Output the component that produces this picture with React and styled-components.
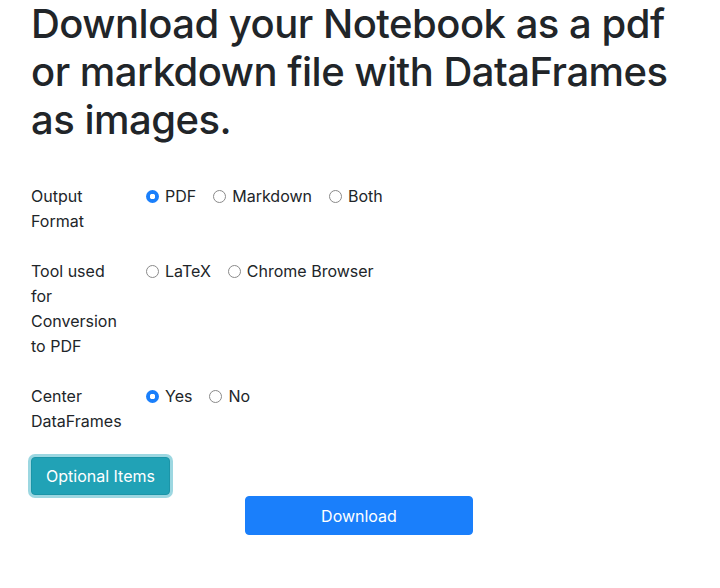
import React, { useState } from "react";
import styled, { createGlobalStyle } from "styled-components";

const Global = createGlobalStyle`
  html, body { margin: 0; padding: 0; background: #fff; }
  body {
    font-family: Inter, "Liberation Sans", Arial, sans-serif;
    color: #212529;
    font-size: 16px;
  }
`;

const Page = styled.div`
  width: 720px;
  padding: 0 0 0 31px;
  box-sizing: border-box;
`;

const Title = styled.h1`
  margin: 0 0 40px;
  font-size: 40px;
  line-height: 48px;
  font-weight: 450;
  letter-spacing: -0.5px;
  width: 660px;
`;

const Row = styled.div`
  display: grid;
  grid-template-columns: 92px 1fr;
  column-gap: 23px;
  line-height: 25px;
  margin-bottom: 25px;
`;

const Label = styled.div``;

const Options = styled.div`
  display: flex;
  align-items: flex-start;
`;

const Option = styled.label`
  display: flex;
  align-items: center;
  height: 25px;
  margin-right: 17px;
  cursor: pointer;
`;

const Radio = styled.input.attrs({ type: "radio" })`
  appearance: none;
  -webkit-appearance: none;
  margin: 0 6px 0 0;
  width: 13px;
  height: 13px;
  border-radius: 50%;
  border: 1px solid #8a8a8a;
  background: #fff;
  box-sizing: border-box;
  &:checked {
    border: none;
    background: radial-gradient(circle, #fff 0 2.6px, #1a7ffb 3px);
  }
`;

const OptionalButton = styled.button`
  margin-top: -2px;
  height: 38px;
  padding: 0 14px;
  font-family: inherit;
  font-size: 16px;
  color: #fff;
  background: #21a2b6;
  border: 1px solid #1c95a8;
  border-radius: 4px;
  box-shadow: 0 0 0 3px rgba(58, 176, 195, 0.5);
  cursor: pointer;
`;

const Footer = styled.div`
  display: flex;
  justify-content: center;
  margin: 1px 0 0 -31px;
  padding-right: 2px;
`;

const DownloadButton = styled.button`
  width: 228px;
  height: 39px;
  font-family: inherit;
  font-size: 16px;
  color: #fff;
  background: #1a7ffb;
  border: 1px solid #1a7ffb;
  border-radius: 4px;
  cursor: pointer;
`;

function RadioRow({ label, name, options, value, onChange }) {
  return (
    <Row>
      <Label>{label}</Label>
      <Options>
        {options.map((o) => (
          <Option key={o}>
            <Radio name={name} checked={value === o} onChange={() => onChange(o)} />
            {o}
          </Option>
        ))}
      </Options>
    </Row>
  );
}

export default function App() {
  const [fmt, setFmt] = useState("PDF");
  const [tool, setTool] = useState(null);
  const [center, setCenter] = useState("Yes");
  return (
    <Page>
      <Global />
      <Title>Download your Notebook as a pdf or markdown file with DataFrames as images.</Title>
      <RadioRow
        label="Output Format"
        name="fmt"
        options={["PDF", "Markdown", "Both"]}
        value={fmt}
        onChange={setFmt}
      />
      <RadioRow
        label="Tool used for Conversion to PDF"
        name="tool"
        options={["LaTeX", "Chrome Browser"]}
        value={tool}
        onChange={setTool}
      />
      <RadioRow
        label="Center DataFrames"
        name="center"
        options={["Yes", "No"]}
        value={center}
        onChange={setCenter}
      />
      <OptionalButton>Optional Items</OptionalButton>
      <Footer>
        <DownloadButton>Download</DownloadButton>
      </Footer>
    </Page>
  );
}
